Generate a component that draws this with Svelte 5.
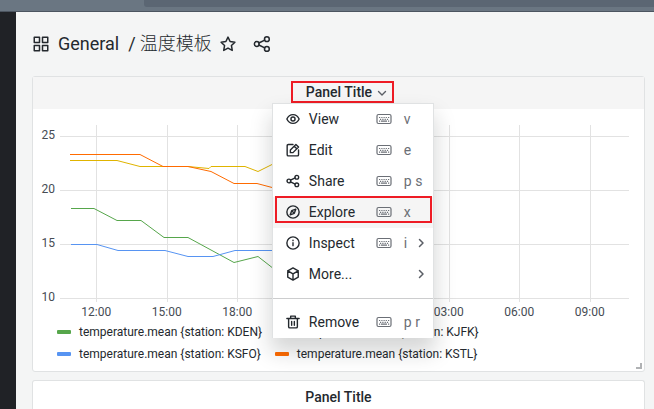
<script>
  const menu = [
    { icon: 'eye', label: 'View', keys: 'v' },
    { icon: 'edit', label: 'Edit', keys: 'e' },
    { icon: 'share', label: 'Share', keys: 'p s' },
    { icon: 'compass', label: 'Explore', keys: 'x', active: true },
    { icon: 'info', label: 'Inspect', keys: 'i', more: true },
    { icon: 'cube', label: 'More...', more: true },
    { divider: true },
    { icon: 'trash', label: 'Remove', keys: 'p r' }
  ];
  const series = [
    { name: 'KDEN', color: '#56a64b', points: '11,83.5 34,83.5 57,95.5 81,95.5 104,112.5 128,112.5 174,137.5 198,131.5 214,144' },
    { name: 'KJFK', color: '#e0b400', points: '10,35.5 57,35.5 80,41.5 128,41.5 149,43.5 151,41.5 185,41.5 198,46.5 214,38.5' },
    { name: 'KSFO', color: '#5794f2', points: '11,119.5 37,119.5 58,125.5 105,125.5 128,131.5 153,131.5 175,125.5 214,125.5' },
    { name: 'KSTL', color: '#ff6b00', points: '10,29.5 80,29.5 103,41.5 128,41.5 151,46.5 174,58.5 197,58.5 214,63' }
  ];
  const times = ['12:00', '15:00', '18:00', '21:00', '00:00', '03:00', '06:00', '09:00'];
  const temps = [25, 20, 15, 10];
  const columns = [36.5, 107.5, 177.5, 248.5, 318.5, 389.5, 459.5, 530.5];
  const rows = [11.5, 65.5, 119.5, 173.5];
</script>

{#snippet icon(name)}
  <svg class="icon" viewBox="0 0 24 24" aria-hidden="true">
    {#if name === 'apps'}
      <path d="M3 3h7v7H3zM14 3h7v7h-7zM3 14h7v7H3zM14 14h7v7h-7z" />
    {:else if name === 'star'}
      <path d="M12 2.8l2.8 5.9 6.4.9-4.6 4.5 1.1 6.4L12 17.4l-5.7 3.1 1.1-6.4-4.6-4.5 6.4-.9z" />
    {:else if name === 'share'}
      <circle cx="18.500" cy="5.500" r="3.200" /><circle cx="5" cy="12" r="3.200" /><circle cx="18.500" cy="18.500" r="3.200" />
      <path d="M7.700 10.700l8-3.900M7.700 13.300l8 3.900" />
    {:else if name === 'eye'}
      <path d="M1.500 12C3.500 7.500 7.500 4.500 12 4.500s8.500 3 10.500 7.500c-2 4.500-6 7.500-10.500 7.500S3.500 16.500 1.500 12z" />
      <circle cx="12" cy="12" r="3.500" />
    {:else if name === 'edit'}
      <path d="M12 2.500H4a2 2 0 0 0-2 2V20a2 2 0 0 0 2 2h15.500a2 2 0 0 0 2-2v-8M7.500 16.500V12L17 2.500 21.500 7 12 16.500zM14 5.500l4.500 4.500" />
    {:else if name === 'compass'}
      <circle cx="12" cy="12" r="10.500" /><path d="M16.800 7.200l-2.600 7-7 2.600 2.600-7zM10.300 10.300l3.400 3.400" />
    {:else if name === 'info'}
      <circle cx="12" cy="12" r="10.500" /><path d="M12 11.500v5M12 7v1" />
    {:else if name === 'cube'}
      <path d="M12 1.500l9 5v11l-9 5-9-5v-11zM3 6.500l9 5.200 9-5.200M12 11.700v10.800" />
    {:else if name === 'trash'}
      <path d="M1.500 6h21M8 6V2h8v4M4.500 6v14a2 2 0 0 0 2 2h11a2 2 0 0 0 2-2V6M9.700 11v6.500M14.300 11v6.500" />
    {:else if name === 'down'}
      <path d="M6 9.500l6 6 6-6" />
    {:else if name === 'right'}
      <path d="M9 5l7 7-7 7" />
    {/if}
  </svg>
{/snippet}

<div class="topbar"><div class="address"></div></div>
<div class="shell">
  <nav class="sidebar" aria-label="Main"></nav>
  <main>
    <header class="toolbar">
      {@render icon('apps')}
      <h1><a href="#general">General</a><span>/</span><a class="name" href="#dashboard">温度模板</a></h1>
      <button aria-label="Mark as favorite">{@render icon('star')}</button>
      <button class="share" aria-label="Share dashboard">{@render icon('share')}</button>
    </header>

    <section class="panel">
      <div class="panel-header hovered">
        <div class="anchor">
          <button class="title marked" aria-expanded="true">Panel Title {@render icon('down')}</button>
          <div class="menu" role="menu">
            {#each menu as item}
              {#if item.divider}
                <hr />
              {:else}
                <button class="item" class:active={item.active} role="menuitem">
                  {@render icon(item.icon)}
                  <span class="label">{item.label}</span>
                  <span class="keys">
                    {#if item.keys}
                      <svg class="keyboard" viewBox="0 0 16 12" aria-hidden="true">
                        <rect x="1" y="1.500" width="14" height="9" rx="1.500" />
                        <path d="M3 4.500h1.200M5.300 4.500h1.200M7.500 4.500h1.200M9.700 4.500h1.200M12 4.500h1.200M4 6.300h1.200M6.300 6.300h1.200M8.600 6.300h1.200M10.900 6.300h1.200M3 8.200h1.200M5 8.200h6M12 8.200h1.200" />
                      </svg>
                      {item.keys}
                    {/if}
                  </span>
                  {#if item.more}<span class="more">{@render icon('right')}</span>{/if}
                  {#if item.active}<span class="marker"></span>{/if}
                </button>
              {/if}
            {/each}
          </div>
        </div>
      </div>

      <div class="chart">
        <div class="temps">
          {#each temps as t}<span>{t}</span>{/each}
        </div>
        <svg class="plot" viewBox="0 0 569 178" preserveAspectRatio="none" role="img" aria-label="Temperature by station">
          {#each columns as x}<line x1={x} x2={x} y1="0" y2="177" />{/each}
          {#each rows as y}<line x1="0" x2="569" y1={y} y2={y} />{/each}
          {#each series as s}<polyline points={s.points} stroke={s.color} />{/each}
        </svg>
      </div>
      <div class="times">
        {#each times as t}<span>{t}</span>{/each}
      </div>
      <ul class="legend">
        {#each series as s}
          <li><i style:background={s.color}></i>temperature.mean {'{'}station: {s.name}{'}'}</li>
        {/each}
      </ul>
      <span class="resize"></span>
    </section>

    <section class="panel second">
      <div class="panel-header"><h2 class="title">Panel Title</h2></div>
    </section>
  </main>
</div>

<style>
  :global(body) {
    background: #f4f5f5;
    overflow: hidden;
  }
  :global(#app) {
    height: 100vh;
    display: flex;
    flex-direction: column;
    font-family: Roboto, 'Noto Sans CJK SC', sans-serif;
    font-size: 14px;
    color: #24292e;
  }
  * {
    box-sizing: border-box;
  }
  button {
    border: 0;
    padding: 0;
    background: none;
    font: inherit;
    color: inherit;
    display: flex;
    align-items: center;
  }
  a {
    color: inherit;
    text-decoration: none;
  }
  .icon {
    width: 14px;
    height: 14px;
    flex: none;
    fill: none;
    stroke: currentColor;
    stroke-width: 2.4;
    stroke-linejoin: round;
    stroke-linecap: round;
  }
  .topbar {
    flex: none;
    height: 12px;
    padding-left: 144px;
    background: #6a7682;
    border-bottom: 1px solid #4c5560;
  }
  .address {
    height: 7px;
    background: #5b6673;
    border-radius: 0 0 0 3px;
  }
  .shell {
    flex: 1;
    min-height: 0;
    display: flex;
  }
  .sidebar {
    flex: none;
    width: 16px;
    background: #202226;
  }
  main {
    flex: 1;
    min-width: 0;
    padding: 0 9px 0 16px;
    display: flex;
    flex-direction: column;
    overflow: hidden;
  }
  .toolbar {
    flex: none;
    height: 64px;
    display: flex;
    align-items: center;
  }
  .toolbar .icon {
    width: 18px;
    height: 18px;
    stroke-width: 2;
  }
  h1 {
    margin: 0 7px 0 8px;
    font-size: 18px;
    font-weight: 400;
    line-height: 24px;
    display: flex;
  }
  h1 span {
    margin: 0 4px 0 9px;
  }
  .name {
    font-weight: 300;
  }
  .share {
    margin-left: 16px;
  }
  .panel {
    position: relative;
    flex: none;
    background: #fff;
    border: 1px solid #e0e2e3;
    border-radius: 3px;
  }
  .second {
    flex: 1;
    margin-top: 8px;
    border-bottom: 0;
  }
  .panel-header {
    height: 32px;
    display: flex;
    justify-content: center;
    align-items: center;
  }
  .hovered {
    background: #f5f5f5;
    padding-left: 8px;
    padding-bottom: 2px;
  }
  .title {
    margin: 0;
    font-size: 14px;
    font-weight: 500;
    line-height: 18px;
  }
  .title .icon {
    margin: 2px 0 0 3px;
    color: #5b5f66;
  }
  .anchor {
    position: relative;
  }
  .marked {
    border: 2px solid #ee1c25;
    padding: 0 3px 0 13px;
  }
  .menu {
    position: absolute;
    z-index: 2;
    top: 22px;
    left: -19px;
    width: 162px;
    background: #fff;
    border: 1px solid #e0e2e3;
    border-bottom: 0;
    box-shadow: 0 13px 20px 1px rgba(24, 26, 27, 0.18);
  }
  .item {
    position: relative;
    width: 100%;
    height: 31px;
    padding: 0 4px 2px 13px;
    text-align: left;
  }
  .item.active {
    background: #f5f5f5;
  }
  .label {
    flex: 1;
    margin-left: 9px;
  }
  .keys {
    width: 53px;
    display: flex;
    align-items: center;
    gap: 12px;
    color: #6b6f76;
  }
  .keyboard {
    width: 16px;
    height: 12px;
    fill: none;
    stroke: currentColor;
    stroke-width: 1.2;
  }
  .more {
    position: absolute;
    right: 6px;
    display: flex;
    color: #5b5f66;
  }
  .more .icon {
    width: 12px;
    height: 12px;
    stroke-width: 3;
  }
  .marker {
    position: absolute;
    inset: -1px 1px 5px 2px;
    border: 2px solid #ee1c25;
  }
  hr {
    margin: 8px 0;
    border: 0;
    height: 1px;
    background: #cccdce;
  }
  .chart {
    display: flex;
    padding: 16px 15px 0 8px;
  }
  .temps {
    width: 14px;
    margin: 2px 5px 0 0;
    height: 178px;
    display: flex;
    flex-direction: column;
    justify-content: space-between;
    font-size: 12px;
    line-height: 16px;
    text-align: right;
    color: #464c54;
  }
  .plot {
    flex: 1;
    min-width: 0;
    height: 178px;
    fill: none;
  }
  .plot line {
    stroke: #e2e2e2;
    vector-effect: non-scaling-stroke;
  }
  .plot polyline {
    stroke-width: 1;
    vector-effect: non-scaling-stroke;
  }
  .times {
    display: grid;
    grid-template-columns: repeat(8, 1fr);
    padding: 0 19px 0 28px;
    text-align: center;
    font-size: 12px;
    line-height: 14px;
    color: #464c54;
  }
  .legend {
    margin: 0;
    padding: 2px 140px 6px 24px;
    list-style: none;
    display: flex;
    flex-wrap: wrap;
    column-gap: 14px;
    font-size: 12px;
    line-height: 22px;
  }
  .legend li {
    display: flex;
    align-items: center;
    white-space: nowrap;
  }
  .legend i {
    width: 14px;
    height: 4px;
    margin-right: 8px;
    border-radius: 1px;
  }
  .resize {
    position: absolute;
    right: 2px;
    bottom: 2px;
    width: 6px;
    height: 6px;
    border: solid #b0b2b4;
    border-width: 0 2px 2px 0;
  }
</style>
